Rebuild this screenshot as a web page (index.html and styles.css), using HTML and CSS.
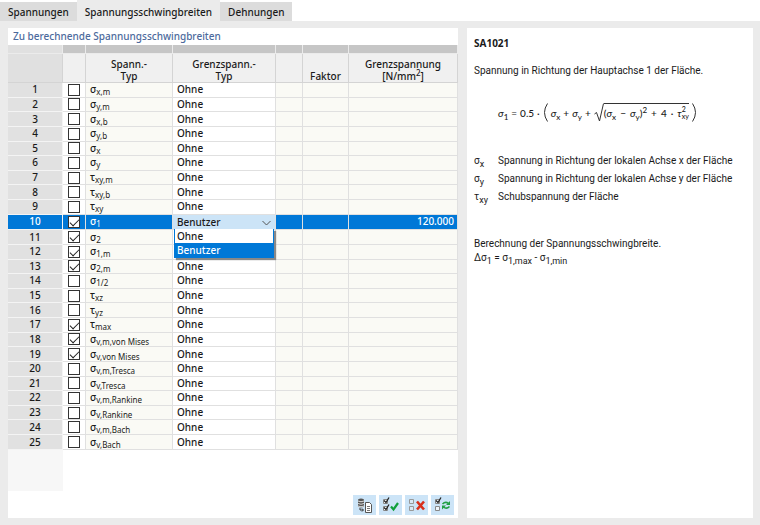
FILE: index.html
```html
<!DOCTYPE html>
<html lang="de">
  <head>
    <meta charset="UTF-8" />
    <meta name="viewport" content="width=device-width, initial-scale=1.0" />
    <title>Spannungsschwingbreiten</title>
    <link rel="stylesheet" href="styles.css">
  </head>
  <body>
    <div class="tabs" role="tablist">
      <button class="tab" role="tab" type="button">Spannungen</button>
      <button class="tab active" role="tab" type="button" aria-selected="true">Spannungsschwingbreiten</button>
      <button class="tab" role="tab" type="button">Dehnungen</button>
    </div>

    <main class="content">
      <section class="panel list">
        <h2>Zu berechnende Spannungsschwingbreiten</h2>
        <table>
          <colgroup>
            <col class="c-num"><col class="c-check"><col class="c-type"><col class="c-limit"><col class="c-empty"><col class="c-factor"><col>
          </colgroup>
          <thead>
            <tr class="strip"><td></td><td></td><td></td><td></td><td></td><td></td><td></td></tr>
            <tr class="head">
              <td></td><td></td>
              <th>Spann.-<br>Typ</th>
              <th>Grenzspann.-<br>Typ</th>
              <td></td>
              <th>Faktor</th>
              <th>Grenzspannung<br>[N/mm<sup>2</sup>]</th>
            </tr>
          </thead>
          <tbody>
            <tr><th>1</th><td><input type="checkbox" id="s1"></td><td><label for="s1">σ<sub>x,m</sub></label></td><td>Ohne</td><td></td><td></td><td></td></tr>
            <tr><th>2</th><td><input type="checkbox" id="s2"></td><td><label for="s2">σ<sub>y,m</sub></label></td><td>Ohne</td><td></td><td></td><td></td></tr>
            <tr><th>3</th><td><input type="checkbox" id="s3"></td><td><label for="s3">σ<sub>x,b</sub></label></td><td>Ohne</td><td></td><td></td><td></td></tr>
            <tr><th>4</th><td><input type="checkbox" id="s4"></td><td><label for="s4">σ<sub>y,b</sub></label></td><td>Ohne</td><td></td><td></td><td></td></tr>
            <tr><th>5</th><td><input type="checkbox" id="s5"></td><td><label for="s5">σ<sub>x</sub></label></td><td>Ohne</td><td></td><td></td><td></td></tr>
            <tr><th>6</th><td><input type="checkbox" id="s6"></td><td><label for="s6">σ<sub>y</sub></label></td><td>Ohne</td><td></td><td></td><td></td></tr>
            <tr><th>7</th><td><input type="checkbox" id="s7"></td><td><label for="s7">τ<sub>xy,m</sub></label></td><td>Ohne</td><td></td><td></td><td></td></tr>
            <tr><th>8</th><td><input type="checkbox" id="s8"></td><td><label for="s8">τ<sub>xy,b</sub></label></td><td>Ohne</td><td></td><td></td><td></td></tr>
            <tr><th>9</th><td><input type="checkbox" id="s9"></td><td><label for="s9">τ<sub>xy</sub></label></td><td>Ohne</td><td></td><td></td><td></td></tr>
            <tr class="selected">
              <th>10</th>
              <td><input type="checkbox" id="s10" checked></td>
              <td><label for="s10">σ<sub>1</sub></label></td>
              <td>
                <div class="combo">
                  <select aria-label="Grenzspannungs-Typ">
                    <option>Ohne</option>
                    <option selected>Benutzer</option>
                  </select>
                  <svg class="arrow" viewBox="0 0 9 6"><path d="M.5 1l4 4 4-4" /></svg>
                  <ul class="menu" role="listbox">
                    <li role="option">Ohne</li>
                    <li role="option" class="current" aria-selected="true">Benutzer</li>
                  </ul>
                </div>
              </td>
              <td></td><td></td><td>120.000</td>
            </tr>
            <tr><th>11</th><td><input type="checkbox" id="s11" checked></td><td><label for="s11">σ<sub>2</sub></label></td><td></td><td></td><td></td><td></td></tr>
            <tr><th>12</th><td><input type="checkbox" id="s12" checked></td><td><label for="s12">σ<sub>1,m</sub></label></td><td></td><td></td><td></td><td></td></tr>
            <tr><th>13</th><td><input type="checkbox" id="s13" checked></td><td><label for="s13">σ<sub>2,m</sub></label></td><td>Ohne</td><td></td><td></td><td></td></tr>
            <tr><th>14</th><td><input type="checkbox" id="s14"></td><td><label for="s14">σ<sub>1/2</sub></label></td><td>Ohne</td><td></td><td></td><td></td></tr>
            <tr><th>15</th><td><input type="checkbox" id="s15"></td><td><label for="s15">τ<sub>xz</sub></label></td><td>Ohne</td><td></td><td></td><td></td></tr>
            <tr><th>16</th><td><input type="checkbox" id="s16"></td><td><label for="s16">τ<sub>yz</sub></label></td><td>Ohne</td><td></td><td></td><td></td></tr>
            <tr><th>17</th><td><input type="checkbox" id="s17" checked></td><td><label for="s17">τ<sub>max</sub></label></td><td>Ohne</td><td></td><td></td><td></td></tr>
            <tr><th>18</th><td><input type="checkbox" id="s18" checked></td><td><label for="s18">σ<sub>v,m,von Mises</sub></label></td><td>Ohne</td><td></td><td></td><td></td></tr>
            <tr><th>19</th><td><input type="checkbox" id="s19" checked></td><td><label for="s19">σ<sub>v,von Mises</sub></label></td><td>Ohne</td><td></td><td></td><td></td></tr>
            <tr><th>20</th><td><input type="checkbox" id="s20"></td><td><label for="s20">σ<sub>v,m,Tresca</sub></label></td><td>Ohne</td><td></td><td></td><td></td></tr>
            <tr><th>21</th><td><input type="checkbox" id="s21"></td><td><label for="s21">σ<sub>v,Tresca</sub></label></td><td>Ohne</td><td></td><td></td><td></td></tr>
            <tr><th>22</th><td><input type="checkbox" id="s22"></td><td><label for="s22">σ<sub>v,m,Rankine</sub></label></td><td>Ohne</td><td></td><td></td><td></td></tr>
            <tr><th>23</th><td><input type="checkbox" id="s23"></td><td><label for="s23">σ<sub>v,Rankine</sub></label></td><td>Ohne</td><td></td><td></td><td></td></tr>
            <tr><th>24</th><td><input type="checkbox" id="s24"></td><td><label for="s24">σ<sub>v,m,Bach</sub></label></td><td>Ohne</td><td></td><td></td><td></td></tr>
            <tr><th>25</th><td><input type="checkbox" id="s25"></td><td><label for="s25">σ<sub>v,Bach</sub></label></td><td>Ohne</td><td></td><td></td><td></td></tr>
          </tbody>
        </table>
        <div class="filler"></div>
        <div class="toolbar">
          <button type="button" aria-label="Kopieren">
            <svg viewBox="0 0 16 16">
              <path d="M1 2.500q3-2 6 0v7q-3 2-6 0z" fill="#555" />
              <path d="M1 4q3 1.500 6 0M1 6.500q3 1.500 6 0M1 9q3 1.500 6 0" fill="none" stroke="#ddd" />
              <path d="M3 11v2h3M5 11.500L6.500 13 5 14.500" fill="none" stroke="#333" />
              <path d="M8.500 5.500h4l2 2v8h-6z" fill="#fff" stroke="#555" />
              <path d="M10 9.500h3M10 11.500h3M10 13.500h3" stroke="#777" />
            </svg>
          </button>
          <button type="button" aria-label="Alle auswählen">
            <svg viewBox="0 0 16 16">
              <path d="M.5 2.500h4v4h-4zM.5 9.500h4v4h-4z" fill="#fff" stroke="#888" />
              <path d="M1 3.500l2 2 3-5M1 10.500l2 2 3-5" fill="none" stroke="#222" stroke-width="1.300" />
              <path d="M8 9.500l2.500 3 4.500-6.500" fill="none" stroke="#10a03c" stroke-width="2.200" />
            </svg>
          </button>
          <button type="button" aria-label="Alle abwählen">
            <svg viewBox="0 0 16 16">
              <path d="M.5 2.500h4v4h-4zM.5 9.500h4v4h-4z" fill="#d9e8f5" stroke="#999" />
              <path d="M8 4.500l7 8M15 4.500l-7 8" fill="none" stroke="#d9301c" stroke-width="2.600" />
            </svg>
          </button>
          <button type="button" aria-label="Auswahl umkehren">
            <svg viewBox="0 0 16 16">
              <path d="M.5 2.500h4v4h-4zM.5 9.500h4v4h-4z" fill="#eef5fb" stroke="#888" />
              <path d="M1 3.500l2 2 3-5" fill="none" stroke="#222" stroke-width="1.300" />
              <path d="M7.500 7q3-3 6-.5M14.500 9.500q-3 3-6 .5" fill="none" stroke="#22a045" stroke-width="1.600" />
              <path d="M15 4v4h-4zM7 12.500v-4h4z" fill="#22a045" />
            </svg>
          </button>
        </div>
      </section>

      <section class="panel info">
        <h3>SA1021</h3>
        <p>Spannung in Richtung der Hauptachse 1 der Fläche.</p>
        <div class="formula">
          <span><i>σ</i><sub>1</sub></span>
          <span>=</span>
          <span>0.5</span>
          <span>·</span>
          <span class="group">
            <svg class="paren" viewBox="0 0 5 19"><path d="M4.500.5Q-1.500 9.500 4.500 18.500" /></svg>
            <span><i>σ</i><sub>x</sub></span>
            <span>+</span>
            <span><i>σ</i><sub>y</sub></span>
            <span>+</span>
            <span class="root">
              <svg class="radical" viewBox="0 0 10 19"><path d="M.5 11l2-1.500L5.500 18 9.500.5" /></svg>
              <span class="radicand">
                <span>(<i>σ</i><sub>x</sub></span>
                <span>−</span>
                <span><i>σ</i><sub>y</sub>)<sup>2</sup></span>
                <span>+</span>
                <span>4</span>
                <span>·</span>
                <span class="tau"><i>τ</i><span class="scripts"><span>2</span><span>xy</span></span></span>
              </span>
            </span>
            <svg class="paren" viewBox="0 0 5 19"><path d="M.5.5Q6.500 9.500.5 18.500" /></svg>
          </span>
        </div>
        <dl>
          <dt>σ<sub>x</sub></dt><dd>Spannung in Richtung der lokalen Achse x der Fläche</dd>
          <dt>σ<sub>y</sub></dt><dd>Spannung in Richtung der lokalen Achse y der Fläche</dd>
          <dt>τ<sub>xy</sub></dt><dd>Schubspannung der Fläche</dd>
        </dl>
        <p>Berechnung der Spannungsschwingbreite.<br>Δσ<sub>1</sub> = σ<sub>1,max</sub> - σ<sub>1,min</sub></p>
      </section>
    </main>
  </body>
</html>
```

FILE: styles.css
```css
* {
  margin: 0;
  padding: 0;
  box-sizing: border-box;
}
body {
  min-height: 100vh;
  display: flex;
  flex-direction: column;
  background: #ebebeb;
  color: #1a1a1a;
  font-family: "Noto Sans", "Open Sans", sans-serif;
  font-size: 10px;
  font-weight: 500;
  line-height: 14px;
}
button, select {
  font: inherit;
  color: inherit;
  border: none;
}
sub, sup {
  font-size: 8px;
  line-height: 0;
}

/* tabs */
.tabs {
  display: flex;
  align-items: flex-end;
  height: 21px;
  background: #fff;
}
.tab {
  height: 19px;
  padding: 0 8px;
  background: #dcdcdc;
}
.tab.active {
  height: 21px;
  padding: 2px 8px 0;
  background: #ebebeb;
}

.content {
  flex: 1;
  display: grid;
  grid-template-columns: 450fr 286fr;
  gap: 9px;
  padding: 7px 7px 7px 8px;
}
.panel {
  min-width: 0;
  background: #fff;
}

/* left side */
.list {
  display: flex;
  flex-direction: column;
}
.list h2 {
  height: 17px;
  padding-left: 5px;
  color: #4c6a9c;
  font-size: 10px;
  font-weight: 500;
  line-height: 17px;
}
table {
  width: 100%;
  height: 405px;
  table-layout: fixed;
  border-spacing: 0;
}
.c-num { width: 55px; }
.c-check { width: 23px; }
.c-type { width: 87px; }
.c-limit { width: 103px; }
.c-empty { width: 27px; }
.c-factor { width: 46px; }

.strip td {
  height: 9px;
  background: #c6c6c6;
  border-right: 1px solid #ebebeb;
  border-bottom: 1px solid #ebebeb;
}
.strip td:first-child {
  background: #e0e0e0;
}
.head th, .head td {
  height: 29px;
  background: #f0f0f0;
  border-right: 1px solid #d4d4d4;
  border-bottom: 1px solid #d4d4d4;
  font-weight: 500;
  line-height: 12px;
  vertical-align: bottom;
}
.head td:first-child {
  background: #e0e0e0;
}
tbody th {
  background: #e1e1e1;
  border-right: 1px solid #f4f4f4;
  border-bottom: 1px solid #f4f4f4;
  font-weight: 500;
}
tbody th, tbody td {
  height: 14px;
  line-height: 13px;
}
tbody td {
  background: #fafaf5;
  border-right: 1px solid #e0e0e0;
  border-bottom: 1px solid #e0e0e0;
  white-space: nowrap;
}
tbody td:nth-child(2) {
  background: #fff;
  text-align: center;
}
tbody td:nth-child(3), tbody td:nth-child(4) {
  padding-left: 4px;
}
tbody td:nth-child(4) {
  background: #fff;
}
tbody td:last-child {
  padding-right: 3px;
  text-align: right;
}
tbody sub {
  font-weight: 400;
  vertical-align: -2px;
}
input[type="checkbox"] {
  appearance: none;
  display: block;
  width: 12px;
  height: 12px;
  margin: 0 auto;
  background: #fff;
  border: 1px solid #333;
}
input[type="checkbox"]:checked::before {
  content: "";
  display: block;
  width: 8px;
  height: 4px;
  margin: 2px 1px;
  border-left: 1px solid #222;
  border-bottom: 1px solid #222;
  transform: rotate(-45deg);
}
.selected th, .selected td, .selected td:nth-child(2) {
  background: #0078d7;
  color: #fff;
}
.selected td:nth-child(4) {
  padding: 0;
  color: #1a1a1a;
}
.combo {
  position: relative;
}
.combo select {
  appearance: none;
  display: block;
  width: 100%;
  height: 14px;
  padding-left: 4px;
  background: #cce4f7;
  line-height: 14px;
}
.arrow {
  position: absolute;
  top: 5px;
  right: 4px;
  width: 9px;
  height: 6px;
  fill: none;
  stroke: #555;
}
.menu {
  position: absolute;
  top: 14px;
  left: 1px;
  right: 1px;
  z-index: 1;
  background: #fff;
  border: 1px solid #0078d7;
  border-top: none;
  box-shadow: 2px 2px 1px #888;
  list-style: none;
}
.menu li {
  height: 14px;
  padding-left: 2px;
  line-height: 14px;
}
.menu .current {
  background: #0078d7;
  color: #fff;
}
.filler {
  flex: 1;
  width: 55px;
  background: #f7f7f7;
}
.toolbar {
  display: flex;
  justify-content: flex-end;
  gap: 3px;
  padding: 4px 4px 3px;
}
.toolbar button {
  display: flex;
  align-items: center;
  justify-content: center;
  width: 23px;
  height: 20px;
  background: #cce4f7;
}
.toolbar svg {
  width: 16px;
  height: 16px;
}

/* right side */
.info {
  padding: 8px 7px;
  font-family: Roboto, "Noto Sans", sans-serif;
  font-weight: 400;
}
.info h3 {
  margin-bottom: 14px;
  font-family: "Noto Sans", sans-serif;
  font-size: 10px;
}
.info sub {
  font-size: 9px;
}
.formula {
  display: flex;
  align-items: center;
  gap: 3px;
  margin: 25px 0 32px 24px;
  font-family: Lato, sans-serif;
  font-weight: 500;
}
.formula sub {
  font-size: 8px;
}
.formula svg {
  fill: none;
  stroke: #333;
}
.group, .radicand {
  display: flex;
  align-items: center;
  gap: 3px;
}
.radicand {
  gap: 4px;
  border-top: 1px solid #333;
}
.paren {
  width: 5px;
  height: 19px;
}
.root {
  display: flex;
}
.radical {
  width: 10px;
  height: 19px;
}
.tau {
  display: flex;
  align-items: center;
}
.scripts {
  display: flex;
  flex-direction: column;
  font-size: 7px;
  line-height: 7px;
}
dl {
  display: grid;
  grid-template-columns: 22px 1fr;
  gap: 4px 2px;
  margin-bottom: 33px;
}
```
